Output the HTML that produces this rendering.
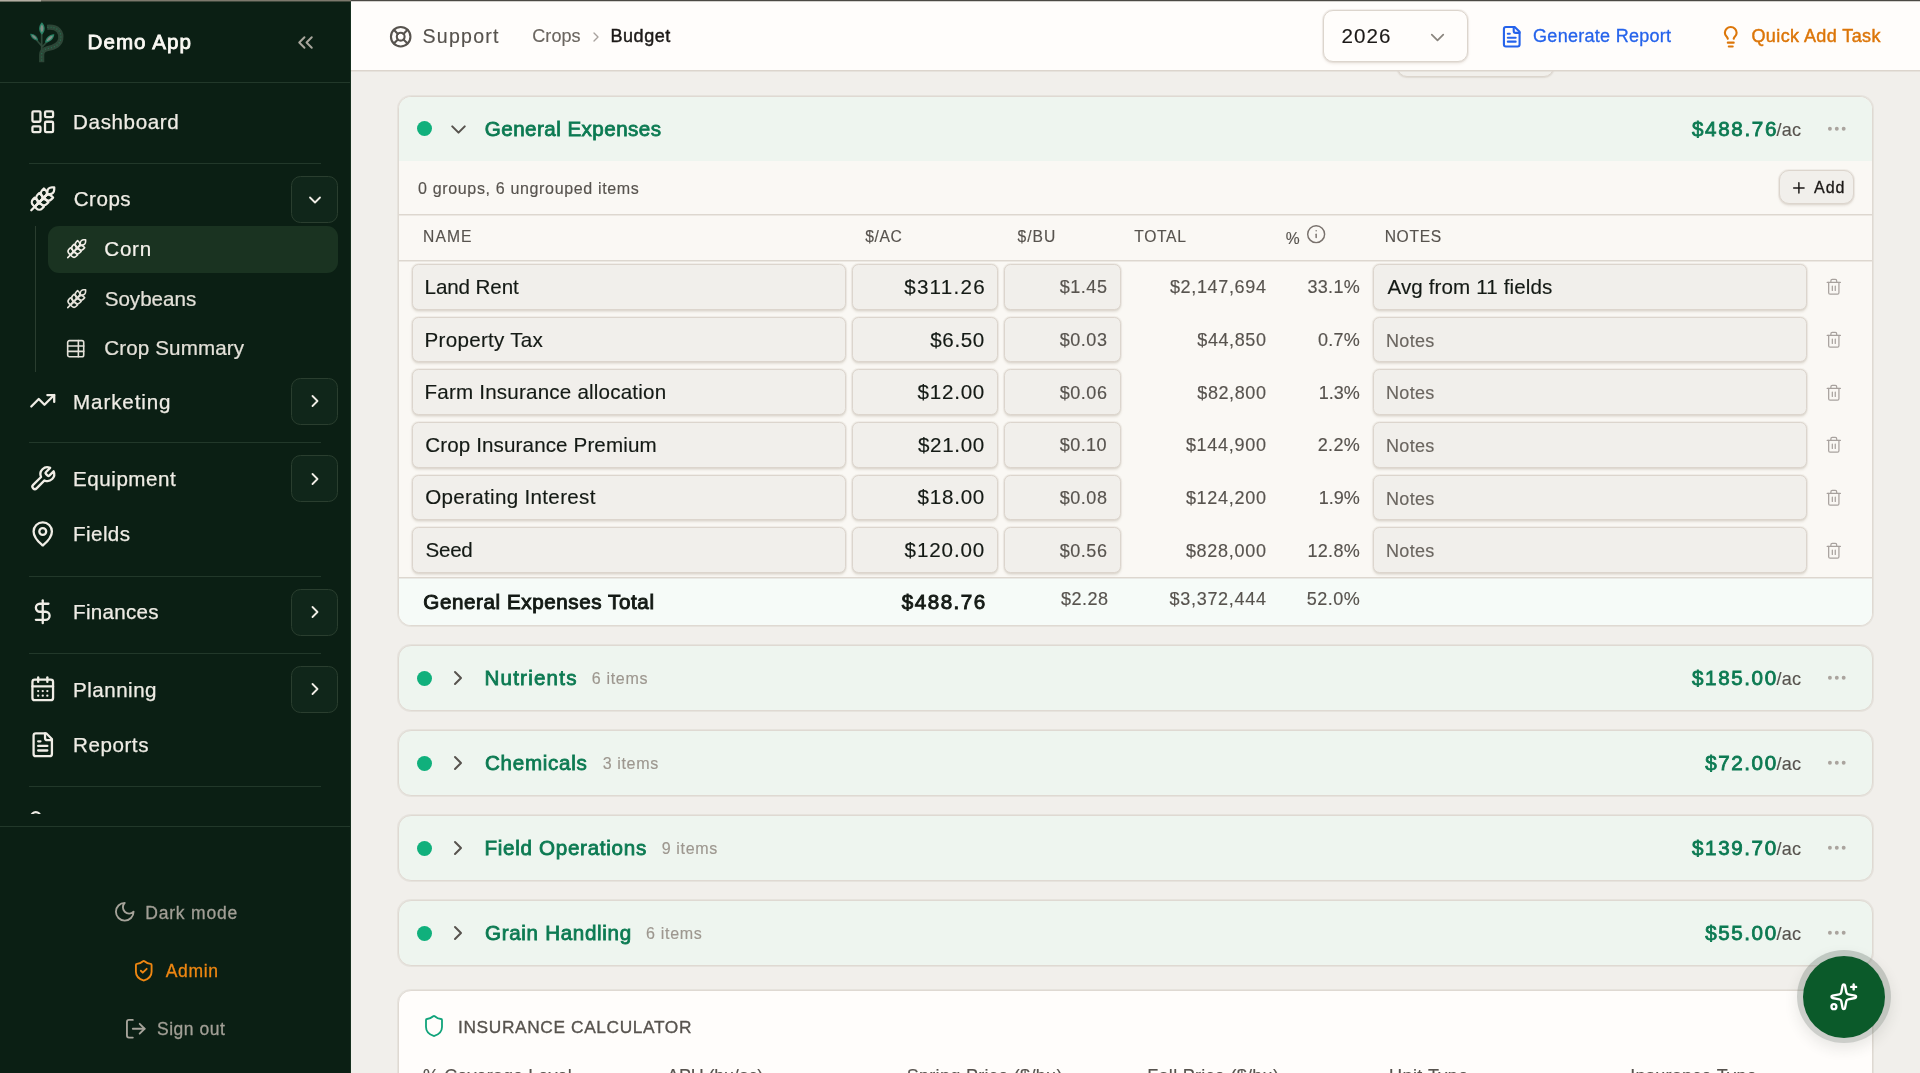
<!DOCTYPE html>
<html lang="en">
<head>
<meta charset="utf-8">
<title>Demo App – Crops – Budget</title>
<style>
*{box-sizing:border-box;margin:0;padding:0}
html,body{width:1920px;height:1073px;overflow:hidden}
body{font-family:"Liberation Sans",Arial,sans-serif;background:#f1efeb;color:#1c1917;position:relative;-webkit-font-smoothing:antialiased}
.abs,.t,.ic{position:absolute}
.t{white-space:nowrap;line-height:24px;height:24px;-webkit-text-stroke-width:.15px}
.ic{fill:none;stroke:currentColor;stroke-width:2;stroke-linecap:round;stroke-linejoin:round;overflow:visible}
#topbar{position:absolute;left:0;top:0;width:1920px;height:2px;z-index:50}
#topbar i{position:absolute;height:1px}
/* sidebar */
#side{position:absolute;left:0;top:0;width:351px;height:1073px;color:#f0ede6;will-change:transform}
#sidebg{position:absolute;left:0;top:0;width:351px;height:1073px;background:#0b1f14}
#side .edge{position:absolute;right:0;top:0;width:1px;height:1073px;background:#16301f}
#side .hr{position:absolute;left:29px;width:292px;height:1px;background:#22382a}
#side .hrf{position:absolute;left:0;width:350px;height:1px;background:#22382a}
#side .nav{color:#efece5;-webkit-text-stroke-width:.25px}
#side .sub{color:#e4e1d9;-webkit-text-stroke-width:.2px}
#side .btn{position:absolute;left:291px;width:47px;height:47px;border-radius:9.5px;background:#10261a;border:1.25px solid #2a3e2f}
#side .foot{color:#a29f96;-webkit-text-stroke-width:.3px}
/* header */
#head{position:absolute;left:0;top:0;width:0;height:0;z-index:5;will-change:transform}
#main{position:absolute;left:0;top:0;width:0;height:0;will-change:transform}
/* cards */
.card{position:absolute;left:398px;width:1475px;border:1px solid #dfd9d2;border-radius:13px;background:#eef5ef;box-shadow:0 0 0 1px rgba(214,208,200,.38)}
.card>.in{position:absolute;left:0;top:0;right:0;bottom:0;border-radius:12px;overflow:hidden}
.sep{position:absolute;left:0;width:1473px;height:1px;background:#ddd7cf;box-shadow:0 1px 0 rgba(214,208,200,.4)}
.gt{color:#0c7a52;-webkit-text-stroke-width:.8px}
.cnt{color:#9d978f}
.amt{color:#0c7a52;-webkit-text-stroke-width:.8px}
.ac{color:#57534e;-webkit-text-stroke-width:.15px}
.dot{position:absolute;width:15px;height:15px;border-radius:50%;background:#10b07c}
.inp{position:absolute;height:47px;border:1px solid #dcd5cd;border-radius:6.5px;background:#f1efeb;box-shadow:0 1.5px 2.5px rgba(120,100,80,.17),0 0 0 1px rgba(214,208,200,.22)}
.cell{font-size:17.5px;color:#57534e}
.ph{font-size:17.5px;color:#6b6660}
.th{font-size:15.5px;color:#57534e;letter-spacing:.9px}
</style>
</head>
<body>
<div id="topbar"><i style="left:0;top:0;width:41px;background:#b3aea3"></i><i style="left:41px;top:0;width:310px;background:#7d796d"></i><i style="left:351px;top:0;width:1569px;background:#4b4944"></i><i style="left:0;top:1px;width:41px;background:#6d7265"></i><i style="left:41px;top:1px;width:310px;background:#3f483c"></i><i style="left:351px;top:1px;width:1569px;background:#d4d2ce"></i></div>

<!-- ================= SIDEBAR ================= -->
<div id="sidebg"></div>
<aside id="side">
<div class="edge"></div>
<!-- logo -->
<svg class="abs" style="left:28px;top:20px" width="38" height="44" viewBox="0 0 38 44">
  <path d="M19.2 7.3 C30.5 6.2 33.8 13 32.7 19.2 C31.6 25.6 25 27.6 19 28.7 C15.2 29.5 13.7 31.5 13.7 35 L13.7 42.3" fill="none" stroke="#2d4637" stroke-width="5.2" stroke-linecap="butt"/>
  <path d="M19.2 7.3 C30.5 6.2 33.8 13 32.7 19.2 C31.6 25.6 25 27.6 19 28.7 C15.2 29.5 13.7 31.5 13.7 35 L13.7 42.3" fill="none" stroke="#1f8a5f" stroke-width="1.1" stroke-dasharray="1 2.1" opacity=".7"/>
  <path d="M13.7 31 L13.7 13 M13.7 26 L7.200 18.500 M13.7 27.500 L21 19.500" fill="none" stroke="#2f4a3a" stroke-width="1.7"/>
  <path d="M13.9 2.2 C17.6 6 17.6 11 13.9 14.800 C10.2 11 10.2 6 13.900 2.200Z" fill="#2a8467"/>
  <path d="M13.9 4.6 C15.9 7 15.9 10 13.900 12.400 C11.9 10 11.9 7 13.900 4.600Z" fill="#848e86"/>
  <g transform="rotate(-50 6.200 17.100)"><path d="M6.2 11.900 C9 14.600 9 19.600 6.200 22.300 C3.400 19.600 3.400 14.600 6.200 11.900Z" fill="#277a60"/><path d="M6.2 13.900 C7.600 15.600 7.600 18.600 6.200 20.300 C4.800 18.600 4.800 15.600 6.200 13.900Z" fill="#808a82"/></g>
  <g transform="rotate(48 21.700 18.400)"><path d="M21.7 12.200 C24.900 15.200 24.900 21.600 21.700 24.600 C18.500 21.600 18.500 15.200 21.700 12.200Z" fill="#2a8467"/><path d="M21.7 14.400 C23.400 16.400 23.400 20.400 21.700 22.400 C20 20.400 20 16.400 21.700 14.400Z" fill="#848e86"/></g>
</svg>
<span class="t" style="left:87.49px;top:29.86px;font-size:20.6px;letter-spacing:1.053px;-webkit-text-stroke-width:.8px;color:#fbf9f4">Demo App</span>
<svg class="ic" width="25" height="25" viewBox="0 0 24 24" style="left:293.30px;top:30.20px;color:#a9a69d;stroke-width:1.9"><path d="m11 17-5-5 5-5"/><path d="m18 17-5-5 5-5"/></svg>
<div class="hrf" style="top:82px"></div>

<!-- Dashboard -->
<svg class="ic" width="27.5" height="27.5" viewBox="0 0 24 24" style="left:28.75px;top:108.05px"><rect width="7" height="9" x="3" y="3" rx="1"/><rect width="7" height="5" x="14" y="3" rx="1"/><rect width="7" height="9" x="14" y="12" rx="1"/><rect width="7" height="5" x="3" y="16" rx="1"/></svg>
<span class="t nav" style="left:73.09px;top:109.76px;font-size:20.6px;letter-spacing:0.615px">Dashboard</span>
<div class="hr" style="top:163px"></div>

<!-- Crops -->
<svg class="ic" width="27.5" height="27.5" viewBox="0 0 24 24" style="left:28.75px;top:185.45px"><path d="M2 22 16 8"/><path d="M3.470 12.530 5 11l1.530 1.530a3.500 3.500 0 0 1 0 4.940L5 19l-1.530-1.530a3.500 3.500 0 0 1 0-4.940Z"/><path d="M7.470 8.530 9 7l1.530 1.530a3.500 3.500 0 0 1 0 4.940L9 15l-1.530-1.530a3.500 3.500 0 0 1 0-4.940Z"/><path d="M11.470 4.530 13 3l1.530 1.530a3.500 3.500 0 0 1 0 4.940L13 11l-1.530-1.530a3.500 3.500 0 0 1 0-4.940Z"/><path d="M20 2h2v2a4 4 0 0 1-4 4h-2V6a4 4 0 0 1 4-4Z"/><path d="M11.470 17.470 13 19l-1.530 1.530a3.500 3.500 0 0 1-4.940 0L5 19l1.530-1.530a3.500 3.500 0 0 1 4.940 0Z"/><path d="M15.470 13.470 17 15l-1.530 1.530a3.500 3.500 0 0 1-4.940 0L9 15l1.530-1.530a3.500 3.500 0 0 1 4.940 0Z"/><path d="M19.470 9.470 21 11l-1.530 1.530a3.500 3.500 0 0 1-4.940 0L13 11l1.530-1.530a3.500 3.500 0 0 1 4.940 0Z"/></svg>
<span class="t nav" style="left:73.73px;top:187.16px;font-size:20.6px;letter-spacing:0.493px">Crops</span>
<div class="btn" style="top:175.9px"></div>
<svg class="ic" width="20" height="20" viewBox="0 0 24 24" style="left:304.60px;top:189.60px;stroke-width:2.2"><path d="m6 9 6 6 6-6"/></svg>
<div class="abs" style="left:35px;top:225.5px;width:1.25px;height:146px;background:#2a3d2f"></div>
<div class="abs" style="left:48px;top:225.5px;width:290px;height:47px;border-radius:11px;background:#1a3321"></div>
<svg class="ic" width="21.4" height="21.4" viewBox="0 0 24 24" style="left:65.60px;top:238.10px;stroke-width:1.8"><path d="M2 22 16 8"/><path d="M3.470 12.530 5 11l1.530 1.530a3.500 3.500 0 0 1 0 4.940L5 19l-1.530-1.530a3.500 3.500 0 0 1 0-4.940Z"/><path d="M7.470 8.530 9 7l1.530 1.530a3.500 3.500 0 0 1 0 4.940L9 15l-1.530-1.530a3.500 3.500 0 0 1 0-4.940Z"/><path d="M11.470 4.530 13 3l1.530 1.530a3.500 3.500 0 0 1 0 4.940L13 11l-1.530-1.530a3.500 3.500 0 0 1 0-4.940Z"/><path d="M20 2h2v2a4 4 0 0 1-4 4h-2V6a4 4 0 0 1 4-4Z"/><path d="M11.470 17.470 13 19l-1.530 1.530a3.500 3.500 0 0 1-4.940 0L5 19l1.530-1.530a3.500 3.500 0 0 1 4.940 0Z"/><path d="M15.470 13.470 17 15l-1.530 1.530a3.500 3.500 0 0 1-4.940 0L9 15l1.530-1.530a3.500 3.500 0 0 1 4.940 0Z"/><path d="M19.470 9.470 21 11l-1.530 1.530a3.500 3.500 0 0 1-4.940 0L13 11l1.530-1.530a3.500 3.500 0 0 1 4.940 0Z"/></svg>
<span class="t sub" style="left:104.33px;top:237.26px;font-size:20.6px;letter-spacing:0.727px;color:#f5f2ec">Corn</span>
<svg class="ic" width="21.4" height="21.4" viewBox="0 0 24 24" style="left:65.60px;top:287.70px;color:#e4e1d9;stroke-width:1.8"><path d="M2 22 16 8"/><path d="M3.470 12.530 5 11l1.530 1.530a3.500 3.500 0 0 1 0 4.940L5 19l-1.530-1.530a3.500 3.500 0 0 1 0-4.940Z"/><path d="M7.470 8.530 9 7l1.530 1.530a3.500 3.500 0 0 1 0 4.940L9 15l-1.530-1.530a3.500 3.500 0 0 1 0-4.940Z"/><path d="M11.470 4.530 13 3l1.530 1.530a3.500 3.500 0 0 1 0 4.940L13 11l-1.530-1.530a3.500 3.500 0 0 1 0-4.940Z"/><path d="M20 2h2v2a4 4 0 0 1-4 4h-2V6a4 4 0 0 1 4-4Z"/><path d="M11.470 17.470 13 19l-1.530 1.530a3.500 3.500 0 0 1-4.940 0L5 19l1.530-1.530a3.500 3.500 0 0 1 4.940 0Z"/><path d="M15.470 13.470 17 15l-1.530 1.530a3.500 3.500 0 0 1-4.940 0L9 15l1.530-1.530a3.500 3.500 0 0 1 4.940 0Z"/><path d="M19.470 9.470 21 11l-1.530 1.530a3.500 3.500 0 0 1-4.940 0L13 11l1.530-1.530a3.500 3.500 0 0 1 4.940 0Z"/></svg>
<span class="t sub" style="left:104.66px;top:286.66px;font-size:20.6px;letter-spacing:-0.003px">Soybeans</span>
<svg class="ic" width="21.4" height="21.4" viewBox="0 0 24 24" style="left:65.40px;top:337.60px;color:#e4e1d9;stroke-width:1.8"><path d="M15 3v18"/><rect width="18" height="18" x="3" y="3" rx="2"/><path d="M21 9H3"/><path d="M21 15H3"/></svg>
<span class="t sub" style="left:104.33px;top:336.16px;font-size:20.6px;letter-spacing:0.109px">Crop Summary</span>

<!-- Marketing -->
<svg class="ic" width="27.5" height="27.5" viewBox="0 0 24 24" style="left:28.75px;top:387.45px"><polyline points="22 7 13.5 15.5 8.5 10.5 2 17"/><polyline points="16 7 22 7 22 13"/></svg>
<span class="t nav" style="left:73.09px;top:389.56px;font-size:20.6px;letter-spacing:0.868px">Marketing</span>
<div class="btn" style="top:377.9px"></div>
<svg class="ic" width="20" height="20" viewBox="0 0 24 24" style="left:304.60px;top:391.20px;stroke-width:2.2"><path d="m9 18 6-6-6-6"/></svg>
<div class="hr" style="top:442px"></div>

<!-- Equipment -->
<svg class="ic" width="27.5" height="27.5" viewBox="0 0 24 24" style="left:28.75px;top:464.85px"><path d="M14.7 6.3a1 1 0 0 0 0 1.4l1.6 1.6a1 1 0 0 0 1.4 0l3.77-3.77a6 6 0 0 1-7.94 7.94l-6.91 6.91a2.12 2.12 0 0 1-3-3l6.91-6.91a6 6 0 0 1 7.94-7.94l-3.76 3.76z"/></svg>
<span class="t nav" style="left:73.09px;top:466.76px;font-size:20.6px;letter-spacing:0.521px">Equipment</span>
<div class="btn" style="top:455.3px"></div>
<svg class="ic" width="20" height="20" viewBox="0 0 24 24" style="left:304.60px;top:468.60px;stroke-width:2.2"><path d="m9 18 6-6-6-6"/></svg>

<!-- Fields -->
<svg class="ic" width="27.5" height="27.5" viewBox="0 0 24 24" style="left:28.75px;top:520.45px"><path d="M20 10c0 4.993-5.539 10.193-7.399 11.799a1 1 0 0 1-1.202 0C9.539 20.193 4 14.993 4 10a8 8 0 0 1 16 0"/><circle cx="12" cy="10" r="3"/></svg>
<span class="t nav" style="left:73.09px;top:522.36px;font-size:20.6px;letter-spacing:0.403px">Fields</span>
<div class="hr" style="top:575.5px"></div>

<!-- Finances -->
<svg class="ic" width="27.5" height="27.5" viewBox="0 0 24 24" style="left:28.75px;top:598.05px"><line x1="12" x2="12" y1="2" y2="22"/><path d="M17 5H9.5a3.5 3.5 0 0 0 0 7h5a3.5 3.5 0 0 1 0 7H6"/></svg>
<span class="t nav" style="left:73.09px;top:599.86px;font-size:20.6px;letter-spacing:0.284px">Finances</span>
<div class="btn" style="top:588.5px"></div>
<svg class="ic" width="20" height="20" viewBox="0 0 24 24" style="left:304.60px;top:601.80px;stroke-width:2.2"><path d="m9 18 6-6-6-6"/></svg>
<div class="hr" style="top:653px"></div>

<!-- Planning -->
<svg class="ic" width="27.5" height="27.5" viewBox="0 0 24 24" style="left:28.75px;top:675.45px"><path d="M8 2v4"/><path d="M16 2v4"/><rect width="18" height="18" x="3" y="4" rx="2"/><path d="M3 10h18"/><path d="M8 14h.01"/><path d="M12 14h.01"/><path d="M16 14h.01"/><path d="M8 18h.01"/><path d="M12 18h.01"/><path d="M16 18h.01"/></svg>
<span class="t nav" style="left:73.09px;top:677.56px;font-size:20.6px;letter-spacing:0.473px">Planning</span>
<div class="btn" style="top:665.9px"></div>
<svg class="ic" width="20" height="20" viewBox="0 0 24 24" style="left:304.60px;top:679.20px;stroke-width:2.2"><path d="m9 18 6-6-6-6"/></svg>

<!-- Reports -->
<svg class="ic" width="27.5" height="27.5" viewBox="0 0 24 24" style="left:28.75px;top:731.25px"><path d="M15 2H6a2 2 0 0 0-2 2v16a2 2 0 0 0 2 2h12a2 2 0 0 0 2-2V7Z"/><path d="M14 2v4a2 2 0 0 0 2 2h4"/><path d="M10 9H8"/><path d="M16 13H8"/><path d="M16 17H8"/></svg>
<span class="t nav" style="left:73.09px;top:733.26px;font-size:20.6px;letter-spacing:0.541px">Reports</span>
<div class="hr" style="top:786px"></div>

<!-- clipped next item -->
<div class="abs" style="left:28px;top:806px;width:30px;height:8.2px;overflow:hidden"><svg class="ic" style="left:0;top:0;position:absolute;stroke-width:2.3" width="30" height="20" viewBox="0 0 30 20"><path d="M3.2 10.7 A4.6 4.6 0 0 1 12.400 10.7"/></svg></div>
<div class="hrf" style="top:825.5px"></div>

<!-- footer -->
<svg class="ic" width="23.5" height="23.5" viewBox="0 0 24 24" style="left:112.85px;top:900.25px;color:#a6a39a;stroke-width:1.9"><path d="M12 3a6 6 0 0 0 9 9 9 9 0 1 1-9-9Z"/></svg>
<span class="t foot" style="left:145.23px;top:900.53px;font-size:17.51px;letter-spacing:0.798px">Dark mode</span>
<svg class="ic" width="23.5" height="23.5" viewBox="0 0 24 24" style="left:131.65px;top:958.65px;color:#ef8712;stroke-width:1.9"><path d="M20 13c0 5-3.500 7.500-7.660 8.950a1 1 0 0 1-.67-.01C7.500 20.500 4 18 4 13V6a1 1 0 0 1 1-1c2 0 4.500-1.200 6.240-2.720a1.170 1.170 0 0 1 1.520 0C14.510 3.810 17 5 19 5a1 1 0 0 1 1 1z"/><path d="m9 12 2 2 4-4"/></svg>
<span class="t foot" style="left:165.70px;top:958.73px;font-size:17.51px;letter-spacing:0.668px;color:#ef8712">Admin</span>
<svg class="ic" width="23.5" height="23.5" viewBox="0 0 24 24" style="left:124.35px;top:1016.95px;color:#a6a39a;stroke-width:1.9"><path d="M9 21H5a2 2 0 0 1-2-2V5a2 2 0 0 1 2-2h4"/><polyline points="16 17 21 12 16 7"/><line x1="21" x2="9" y1="12" y2="12"/></svg>
<span class="t foot" style="left:156.95px;top:1017.13px;font-size:17.51px;letter-spacing:0.538px">Sign out</span>

</aside>

<!-- ================= HEADER ================= -->
<header id="head">
<div class="abs" style="left:351px;top:0;width:1569px;height:71px;background:#fffdfb;border-bottom:1px solid #dcd5cd;box-shadow:0 1px 0 rgba(220,213,205,.5)"></div>
<svg class="ic" width="23.4" height="23.4" viewBox="0 0 24 24" style="left:389.30px;top:24.90px;color:#57534e;stroke-width:2.15"><circle cx="12" cy="12" r="10"/><path d="m4.930 4.930 4.240 4.240"/><path d="m14.830 9.170 4.240-4.240"/><path d="m14.830 14.830 4.240 4.240"/><path d="m9.170 14.830-4.240 4.240"/><circle cx="12" cy="12" r="4"/></svg>
<span class="t" style="left:422.49px;top:24.22px;font-size:19.57px;letter-spacing:1.252px;color:#57534e">Support</span>
<span class="t" style="left:532.26px;top:24.25px;font-size:18.025px;letter-spacing:0.061px;color:#6b6660">Crops</span>
<svg class="ic" width="16" height="16" viewBox="0 0 24 24" style="left:587.60px;top:29.10px;color:#a8a29e;stroke-width:2"><path d="m9 18 6-6-6-6"/></svg>
<span class="t" style="left:610.39px;top:24.25px;font-size:18.025px;letter-spacing:0.567px;color:#1c1917;-webkit-text-stroke-width:.45px">Budget</span>

<div class="abs" style="left:1323px;top:10px;width:145px;height:52px;border:1px solid #dcd5cd;border-radius:10px;background:#fffdfb;box-shadow:0 1.5px 3px rgba(120,100,80,.13),0 0 0 1px rgba(214,208,200,.25)"></div>
<span class="t" style="left:1341.53px;top:23.86px;font-size:20.6px;letter-spacing:1.057px;color:#1c1917">2026</span>
<svg class="ic" width="23" height="23" viewBox="0 0 24 24" style="left:1425.50px;top:25.50px;color:#8a857e;stroke-width:1.8"><path d="m6 9 6 6 6-6"/></svg>

<svg class="ic" width="23.5" height="23.5" viewBox="0 0 24 24" style="left:1499.85px;top:24.85px;color:#2563eb;stroke-width:2.15"><path d="M15 2H6a2 2 0 0 0-2 2v16a2 2 0 0 0 2 2h12a2 2 0 0 0 2-2V7Z"/><path d="M14 2v4a2 2 0 0 0 2 2h4"/><path d="M10 9H8"/><path d="M16 13H8"/><path d="M16 17H8"/></svg>
<span class="t" style="left:1533.06px;top:23.85px;font-size:18.025px;letter-spacing:0.277px;color:#2563eb;-webkit-text-stroke-width:.3px">Generate Report</span>
<svg class="ic" width="23.5" height="23.5" viewBox="0 0 24 24" style="left:1719.35px;top:24.85px;color:#dc7609;stroke-width:2.15"><path d="M15 14c.2-1 .7-1.700 1.500-2.500 1-.9 1.500-2.200 1.500-3.500A6 6 0 0 0 6 8c0 1 .2 2.200 1.500 3.500.7.700 1.300 1.500 1.500 2.500"/><path d="M9 18h6"/><path d="M10 22h4"/></svg>
<span class="t" style="left:1751.46px;top:23.85px;font-size:18.025px;letter-spacing:0.402px;color:#dc7609;-webkit-text-stroke-width:.45px">Quick Add Task</span>

</header>

<!-- ================= MAIN ================= -->
<main id="main">
<div class="abs" style="left:1397px;top:40px;width:157px;height:37px;border:1px solid #dcd5cd;border-radius:10px;background:#f1efeb;box-shadow:0 1px 2px rgba(120,100,80,.1),0 0 0 1px rgba(214,208,200,.25)"></div>
<section class="card" style="top:96px;height:530px;background:#faf8f4"><div class="in">
<div class="abs" style="left:0;top:0;width:1475px;height:64px;background:#eef5ef"></div>
<div class="sep" style="top:117px"></div>
<div class="sep" style="top:163px"></div>
<div class="abs" style="left:0;top:481px;width:1475px;height:50px;background:#f6fbf8"></div>
<div class="sep" style="top:480px"></div>
</div></section>
<div class="dot" style="left:417px;top:121.3px"></div>
<svg class="ic" width="25" height="25" viewBox="0 0 24 24" style="left:445.50px;top:116.50px;color:#57534e"><path d="m6 9 6 6 6-6"/></svg>
<span class="t gt" style="left:484.83px;top:117.16px;font-size:20.6px;letter-spacing:0.451px">General Expenses</span>
<span class="t amt" style="left:1692.00px;top:117.16px;font-size:20.6px;letter-spacing:1.664px">$488.76</span>
<span class="t ac" style="left:1776.60px;top:118.05px;font-size:18.025px;letter-spacing:0.167px">/ac</span>
<svg class="ic" width="23.6" height="23.6" viewBox="0 0 24 24" style="left:1824.80px;top:117.10px;color:#aaa49e;stroke-width:2"><circle cx="12" cy="12" r="1"/><circle cx="19" cy="12" r="1"/><circle cx="5" cy="12" r="1"/></svg>
<span class="t" style="left:418.00px;top:175.83px;font-size:16.068px;letter-spacing:0.639px;color:#57534e">0 groups, 6 ungrouped items</span>
<div class="abs" style="left:1779px;top:170px;width:75px;height:34px;border:1px solid #dcd5cd;border-radius:10px;background:#f1efeb;box-shadow:0 1.5px 2.5px rgba(120,100,80,.14),0 0 0 1px rgba(214,208,200,.25)"></div>
<svg class="ic" width="17.8" height="17.8" viewBox="0 0 24 24" style="left:1789.70px;top:178.70px;color:#1c1917;stroke-width:2"><path d="M5 12h14"/><path d="M12 5v14"/></svg>
<span class="t" style="left:1814.10px;top:175.03px;font-size:16.068px;letter-spacing:0.870px;color:#1c1917;-webkit-text-stroke-width:.3px">Add</span>
<span class="t th" style="left:423.08px;top:225.08px;font-size:15.656px;letter-spacing:1.092px">NAME</span>
<span class="t th" style="left:865.20px;top:225.08px;font-size:15.656px;letter-spacing:0.587px">$/AC</span>
<span class="t th" style="left:1017.50px;top:225.08px;font-size:15.656px;letter-spacing:1.017px">$/BU</span>
<span class="t th" style="left:1134.26px;top:225.08px;font-size:15.656px;letter-spacing:0.666px">TOTAL</span>
<span class="t th" style="left:1384.68px;top:225.08px;font-size:15.656px;letter-spacing:0.647px">NOTES</span>
<span class="t th" style="left:1285.71px;top:227.18px;font-size:15.656px;letter-spacing:0.000px">%</span>
<svg class="ic" width="20.3" height="20.3" viewBox="0 0 24 24" style="left:1305.55px;top:224.15px;color:#78716c;stroke-width:1.7"><circle cx="12" cy="12" r="10"/><path d="M12 16v-4"/><path d="M12 8h.01"/></svg>
<div class="inp" style="left:411.5px;top:264.00px;width:434px;height:45.6px"></div>
<div class="inp" style="left:852px;top:264.00px;width:145.7px;height:45.6px"></div>
<div class="inp" style="left:1004px;top:264.00px;width:116.5px;height:45.6px"></div>
<div class="inp" style="left:1373px;top:264.00px;width:434px;height:45.6px"></div>
<span class="t" style="left:424.59px;top:274.86px;font-size:20.6px;letter-spacing:-0.113px;color:#141a15">Land Rent</span>
<span class="t" style="left:904.20px;top:274.86px;font-size:20.6px;letter-spacing:1.252px;color:#141a15">$311.26</span>
<span class="t cell" style="left:1059.70px;top:275.45px;font-size:18.025px;letter-spacing:0.534px">$1.45</span>
<span class="t cell" style="left:1169.90px;top:275.45px;font-size:18.025px;letter-spacing:0.653px">$2,147,694</span>
<span class="t cell" style="left:1307.44px;top:275.45px;font-size:18.025px;letter-spacing:0.302px">33.1%</span>
<span class="t" style="left:1387.50px;top:274.86px;font-size:20.6px;letter-spacing:0.107px;color:#141a15">Avg from 11 fields</span>
<svg class="ic" width="17.6" height="17.6" viewBox="0 0 24 24" style="left:1825.00px;top:278.25px;color:#a8a29e;stroke-width:1.7"><path d="M3 6h18"/><path d="M19 6v14c0 1-1 2-2 2H7c-1 0-2-1-2-2V6"/><path d="M8 6V4c0-1 1-2 2-2h4c1 0 2 1 2 2v2"/><line x1="10" x2="10" y1="11" y2="17"/><line x1="14" x2="14" y1="11" y2="17"/></svg>
<div class="inp" style="left:411.5px;top:316.65px;width:434px;height:45.6px"></div>
<div class="inp" style="left:852px;top:316.65px;width:145.7px;height:45.6px"></div>
<div class="inp" style="left:1004px;top:316.65px;width:116.5px;height:45.6px"></div>
<div class="inp" style="left:1373px;top:316.65px;width:434px;height:45.6px"></div>
<span class="t" style="left:424.59px;top:327.51px;font-size:20.6px;letter-spacing:0.280px;color:#141a15">Property Tax</span>
<span class="t" style="left:930.20px;top:327.51px;font-size:20.6px;letter-spacing:0.642px;color:#141a15">$6.50</span>
<span class="t cell" style="left:1059.70px;top:328.10px;font-size:18.025px;letter-spacing:0.534px">$0.03</span>
<span class="t cell" style="left:1197.30px;top:328.10px;font-size:18.025px;letter-spacing:0.587px">$44,850</span>
<span class="t cell" style="left:1317.94px;top:328.10px;font-size:18.025px;letter-spacing:0.241px">0.7%</span>
<span class="t ph" style="left:1386.09px;top:328.60px;font-size:18.025px;letter-spacing:0.277px">Notes</span>
<svg class="ic" width="17.6" height="17.6" viewBox="0 0 24 24" style="left:1825.00px;top:330.90px;color:#a8a29e;stroke-width:1.7"><path d="M3 6h18"/><path d="M19 6v14c0 1-1 2-2 2H7c-1 0-2-1-2-2V6"/><path d="M8 6V4c0-1 1-2 2-2h4c1 0 2 1 2 2v2"/><line x1="10" x2="10" y1="11" y2="17"/><line x1="14" x2="14" y1="11" y2="17"/></svg>
<div class="inp" style="left:411.5px;top:369.30px;width:434px;height:45.6px"></div>
<div class="inp" style="left:852px;top:369.30px;width:145.7px;height:45.6px"></div>
<div class="inp" style="left:1004px;top:369.30px;width:116.5px;height:45.6px"></div>
<div class="inp" style="left:1373px;top:369.30px;width:434px;height:45.6px"></div>
<span class="t" style="left:424.59px;top:380.16px;font-size:20.6px;letter-spacing:0.192px;color:#141a15">Farm Insurance allocation</span>
<span class="t" style="left:917.60px;top:380.16px;font-size:20.6px;letter-spacing:0.743px;color:#141a15">$12.00</span>
<span class="t cell" style="left:1059.70px;top:380.75px;font-size:18.025px;letter-spacing:0.534px">$0.06</span>
<span class="t cell" style="left:1197.30px;top:380.75px;font-size:18.025px;letter-spacing:0.587px">$82,800</span>
<span class="t cell" style="left:1318.77px;top:380.75px;font-size:18.025px;letter-spacing:-0.038px">1.3%</span>
<span class="t ph" style="left:1386.09px;top:381.25px;font-size:18.025px;letter-spacing:0.277px">Notes</span>
<svg class="ic" width="17.6" height="17.6" viewBox="0 0 24 24" style="left:1825.00px;top:383.55px;color:#a8a29e;stroke-width:1.7"><path d="M3 6h18"/><path d="M19 6v14c0 1-1 2-2 2H7c-1 0-2-1-2-2V6"/><path d="M8 6V4c0-1 1-2 2-2h4c1 0 2 1 2 2v2"/><line x1="10" x2="10" y1="11" y2="17"/><line x1="14" x2="14" y1="11" y2="17"/></svg>
<div class="inp" style="left:411.5px;top:421.95px;width:434px;height:45.6px"></div>
<div class="inp" style="left:852px;top:421.95px;width:145.7px;height:45.6px"></div>
<div class="inp" style="left:1004px;top:421.95px;width:116.5px;height:45.6px"></div>
<div class="inp" style="left:1373px;top:421.95px;width:434px;height:45.6px"></div>
<span class="t" style="left:425.23px;top:432.81px;font-size:20.6px;letter-spacing:0.120px;color:#141a15">Crop Insurance Premium</span>
<span class="t" style="left:917.90px;top:432.81px;font-size:20.6px;letter-spacing:0.683px;color:#141a15">$21.00</span>
<span class="t cell" style="left:1059.70px;top:433.40px;font-size:18.025px;letter-spacing:0.464px">$0.10</span>
<span class="t cell" style="left:1185.90px;top:433.40px;font-size:18.025px;letter-spacing:0.699px">$144,900</span>
<span class="t cell" style="left:1317.76px;top:433.40px;font-size:18.025px;letter-spacing:0.301px">2.2%</span>
<span class="t ph" style="left:1386.09px;top:433.90px;font-size:18.025px;letter-spacing:0.277px">Notes</span>
<svg class="ic" width="17.6" height="17.6" viewBox="0 0 24 24" style="left:1825.00px;top:436.20px;color:#a8a29e;stroke-width:1.7"><path d="M3 6h18"/><path d="M19 6v14c0 1-1 2-2 2H7c-1 0-2-1-2-2V6"/><path d="M8 6V4c0-1 1-2 2-2h4c1 0 2 1 2 2v2"/><line x1="10" x2="10" y1="11" y2="17"/><line x1="14" x2="14" y1="11" y2="17"/></svg>
<div class="inp" style="left:411.5px;top:474.60px;width:434px;height:45.6px"></div>
<div class="inp" style="left:852px;top:474.60px;width:145.7px;height:45.6px"></div>
<div class="inp" style="left:1004px;top:474.60px;width:116.5px;height:45.6px"></div>
<div class="inp" style="left:1373px;top:474.60px;width:434px;height:45.6px"></div>
<span class="t" style="left:425.23px;top:485.46px;font-size:20.6px;letter-spacing:0.315px;color:#141a15">Operating Interest</span>
<span class="t" style="left:917.60px;top:485.46px;font-size:20.6px;letter-spacing:0.743px;color:#141a15">$18.00</span>
<span class="t cell" style="left:1059.70px;top:486.05px;font-size:18.025px;letter-spacing:0.534px">$0.08</span>
<span class="t cell" style="left:1185.90px;top:486.05px;font-size:18.025px;letter-spacing:0.699px">$124,200</span>
<span class="t cell" style="left:1318.77px;top:486.05px;font-size:18.025px;letter-spacing:-0.038px">1.9%</span>
<span class="t ph" style="left:1386.09px;top:486.55px;font-size:18.025px;letter-spacing:0.277px">Notes</span>
<svg class="ic" width="17.6" height="17.6" viewBox="0 0 24 24" style="left:1825.00px;top:488.85px;color:#a8a29e;stroke-width:1.7"><path d="M3 6h18"/><path d="M19 6v14c0 1-1 2-2 2H7c-1 0-2-1-2-2V6"/><path d="M8 6V4c0-1 1-2 2-2h4c1 0 2 1 2 2v2"/><line x1="10" x2="10" y1="11" y2="17"/><line x1="14" x2="14" y1="11" y2="17"/></svg>
<div class="inp" style="left:411.5px;top:527.25px;width:434px;height:45.6px"></div>
<div class="inp" style="left:852px;top:527.25px;width:145.7px;height:45.6px"></div>
<div class="inp" style="left:1004px;top:527.25px;width:116.5px;height:45.6px"></div>
<div class="inp" style="left:1373px;top:527.25px;width:434px;height:45.6px"></div>
<span class="t" style="left:425.56px;top:538.11px;font-size:20.6px;letter-spacing:-0.303px;color:#141a15">Seed</span>
<span class="t" style="left:904.60px;top:538.11px;font-size:20.6px;letter-spacing:0.877px;color:#141a15">$120.00</span>
<span class="t cell" style="left:1059.70px;top:538.70px;font-size:18.025px;letter-spacing:0.534px">$0.56</span>
<span class="t cell" style="left:1185.90px;top:538.70px;font-size:18.025px;letter-spacing:0.699px">$828,000</span>
<span class="t cell" style="left:1307.47px;top:538.70px;font-size:18.025px;letter-spacing:0.292px">12.8%</span>
<span class="t ph" style="left:1386.09px;top:539.20px;font-size:18.025px;letter-spacing:0.277px">Notes</span>
<svg class="ic" width="17.6" height="17.6" viewBox="0 0 24 24" style="left:1825.00px;top:541.50px;color:#a8a29e;stroke-width:1.7"><path d="M3 6h18"/><path d="M19 6v14c0 1-1 2-2 2H7c-1 0-2-1-2-2V6"/><path d="M8 6V4c0-1 1-2 2-2h4c1 0 2 1 2 2v2"/><line x1="10" x2="10" y1="11" y2="17"/><line x1="14" x2="14" y1="11" y2="17"/></svg>
<span class="t" style="left:423.33px;top:589.56px;font-size:20.6px;letter-spacing:0.588px;-webkit-text-stroke-width:.95px;color:#141a15">General Expenses Total</span>
<span class="t" style="left:901.80px;top:589.56px;font-size:20.6px;letter-spacing:1.497px;-webkit-text-stroke-width:.95px;color:#141a15">$488.76</span>
<span class="t cell" style="left:1061.10px;top:586.55px;font-size:18.025px;letter-spacing:0.484px">$2.28</span>
<span class="t cell" style="left:1169.60px;top:586.55px;font-size:18.025px;letter-spacing:0.686px">$3,372,444</span>
<span class="t cell" style="left:1306.64px;top:586.55px;font-size:18.025px;letter-spacing:0.502px">52.0%</span>
<section class="card" style="top:645px;height:66px"></section>
<div class="dot" style="left:417px;top:670.5px"></div>
<svg class="ic" width="24" height="24" viewBox="0 0 24 24" style="left:446.00px;top:666.00px;color:#57534e"><path d="m9 18 6-6-6-6"/></svg>
<span class="t gt" style="left:484.39px;top:665.66px;font-size:20.6px;letter-spacing:1.218px">Nutrients</span>
<span class="t cnt" style="left:591.75px;top:665.83px;font-size:16.068px;letter-spacing:0.670px">6 items</span>
<span class="t amt" style="left:1692.00px;top:665.66px;font-size:20.6px;letter-spacing:1.610px">$185.00</span>
<span class="t ac" style="left:1776.60px;top:666.55px;font-size:18.025px;letter-spacing:0.167px">/ac</span>
<svg class="ic" width="23.6" height="23.6" viewBox="0 0 24 24" style="left:1824.80px;top:666.20px;color:#aaa49e;stroke-width:2"><circle cx="12" cy="12" r="1"/><circle cx="19" cy="12" r="1"/><circle cx="5" cy="12" r="1"/></svg>
<section class="card" style="top:730px;height:66px"></section>
<div class="dot" style="left:417px;top:755.5px"></div>
<svg class="ic" width="24" height="24" viewBox="0 0 24 24" style="left:446.00px;top:751.00px;color:#57534e"><path d="m9 18 6-6-6-6"/></svg>
<span class="t gt" style="left:485.03px;top:750.66px;font-size:20.6px;letter-spacing:0.709px">Chemicals</span>
<span class="t cnt" style="left:602.70px;top:750.83px;font-size:16.068px;letter-spacing:0.628px">3 items</span>
<span class="t amt" style="left:1705.20px;top:750.66px;font-size:20.6px;letter-spacing:1.583px">$72.00</span>
<span class="t ac" style="left:1776.60px;top:751.55px;font-size:18.025px;letter-spacing:0.167px">/ac</span>
<svg class="ic" width="23.6" height="23.6" viewBox="0 0 24 24" style="left:1824.80px;top:751.20px;color:#aaa49e;stroke-width:2"><circle cx="12" cy="12" r="1"/><circle cx="19" cy="12" r="1"/><circle cx="5" cy="12" r="1"/></svg>
<section class="card" style="top:815px;height:66px"></section>
<div class="dot" style="left:417px;top:840.5px"></div>
<svg class="ic" width="24" height="24" viewBox="0 0 24 24" style="left:446.00px;top:836.00px;color:#57534e"><path d="m9 18 6-6-6-6"/></svg>
<span class="t gt" style="left:484.39px;top:835.66px;font-size:20.6px;letter-spacing:0.716px">Field Operations</span>
<span class="t cnt" style="left:661.65px;top:835.83px;font-size:16.068px;letter-spacing:0.670px">9 items</span>
<span class="t amt" style="left:1692.00px;top:835.66px;font-size:20.6px;letter-spacing:1.610px">$139.70</span>
<span class="t ac" style="left:1776.60px;top:836.55px;font-size:18.025px;letter-spacing:0.167px">/ac</span>
<svg class="ic" width="23.6" height="23.6" viewBox="0 0 24 24" style="left:1824.80px;top:836.20px;color:#aaa49e;stroke-width:2"><circle cx="12" cy="12" r="1"/><circle cx="19" cy="12" r="1"/><circle cx="5" cy="12" r="1"/></svg>
<section class="card" style="top:900px;height:66px"></section>
<div class="dot" style="left:417px;top:925.5px"></div>
<svg class="ic" width="24" height="24" viewBox="0 0 24 24" style="left:446.00px;top:921.00px;color:#57534e"><path d="m9 18 6-6-6-6"/></svg>
<span class="t gt" style="left:485.03px;top:920.66px;font-size:20.6px;letter-spacing:0.673px">Grain Handling</span>
<span class="t cnt" style="left:646.05px;top:920.83px;font-size:16.068px;letter-spacing:0.670px">6 items</span>
<span class="t amt" style="left:1705.20px;top:920.66px;font-size:20.6px;letter-spacing:1.583px">$55.00</span>
<span class="t ac" style="left:1776.60px;top:921.55px;font-size:18.025px;letter-spacing:0.167px">/ac</span>
<svg class="ic" width="23.6" height="23.6" viewBox="0 0 24 24" style="left:1824.80px;top:921.20px;color:#aaa49e;stroke-width:2"><circle cx="12" cy="12" r="1"/><circle cx="19" cy="12" r="1"/><circle cx="5" cy="12" r="1"/></svg>
<section class="card" style="top:990px;height:120px;background:#fffdfb"></section>
<svg class="ic" width="24" height="24" viewBox="0 0 24 24" style="left:422.40px;top:1014.00px;color:#10a37a;stroke-width:1.8"><path d="M20 13c0 5-3.500 7.500-7.660 8.950a1 1 0 0 1-.67-.01C7.500 20.500 4 18 4 13V6a1 1 0 0 1 1-1c2 0 4.500-1.200 6.240-2.720a1.170 1.170 0 0 1 1.520 0C14.510 3.810 17 5 19 5a1 1 0 0 1 1 1z"/></svg>
<span class="t" style="left:458.05px;top:1015.00px;font-size:17.304px;letter-spacing:0.630px;color:#57534e;-webkit-text-stroke-width:.35px">INSURANCE CALCULATOR</span>
<span class="t" style="left:423.04px;top:1063.55px;font-size:18.025px;letter-spacing:0.096px;color:#57534e">% Coverage Level</span>
<span class="t" style="left:667.10px;top:1063.55px;font-size:18.025px;letter-spacing:-0.189px;color:#57534e">APH (bu/ac)</span>
<span class="t" style="left:906.64px;top:1063.55px;font-size:18.025px;letter-spacing:0.311px;color:#57534e">Spring Price ($/bu)</span>
<span class="t" style="left:1147.29px;top:1063.55px;font-size:18.025px;letter-spacing:0.280px;color:#57534e">Fall Price ($/bu)</span>
<span class="t" style="left:1389.07px;top:1063.55px;font-size:18.025px;letter-spacing:0.422px;color:#57534e">Unit Type</span>
<span class="t" style="left:1630.29px;top:1063.55px;font-size:18.025px;letter-spacing:0.275px;color:#57534e">Insurance Type</span>
<div class="abs" style="left:1797.4px;top:950px;width:93.4px;height:93.4px;border-radius:50%;background:rgba(96,108,98,.32);box-shadow:0 6px 14px rgba(40,50,40,.10)"></div>
<div class="abs" style="left:1803px;top:955.6px;width:82.2px;height:82.2px;border-radius:50%;background:#0b5a2a"></div>
<svg class="ic" width="29.6" height="29.6" viewBox="0 0 24 24" style="left:1829.20px;top:982.20px;color:#fff;stroke-width:1.9"><path d="M11.017 2.814a1 1 0 0 1 1.966 0l1.051 5.558a2 2 0 0 0 1.594 1.594l5.558 1.051a1 1 0 0 1 0 1.966l-5.558 1.051a2 2 0 0 0-1.594 1.594l-1.051 5.558a1 1 0 0 1-1.966 0l-1.051-5.558a2 2 0 0 0-1.594-1.594l-5.558-1.051a1 1 0 0 1 0-1.966l5.558-1.051a2 2 0 0 0 1.594-1.594z"/><path d="M20 2v4"/><path d="M22 4h-4"/><circle cx="4" cy="20" r="2"/></svg>

</main>
</body>
</html>
